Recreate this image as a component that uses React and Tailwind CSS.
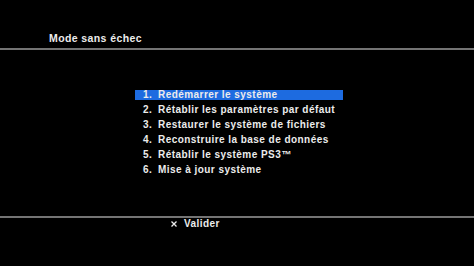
import React from "react";

const items = [
  "Redémarrer le système",
  "Rétablir les paramètres par défaut",
  "Restaurer le système de fichiers",
  "Reconstruire la base de données",
  "Rétablir le système PS3™",
  "Mise à jour système",
];

export default function App() {
  return (
    <div
      className="w-[474px] h-[266px] bg-black flex flex-col text-[#ececec] font-bold overflow-hidden"
      style={{ fontFamily: '"Liberation Sans", Arial, sans-serif' }}
    >
      {/* Title */}
      <div className="h-[48px] flex items-end pl-[49px] pb-[4px]">
        <span className="text-[10.5px] leading-[11px] tracking-[0.4px]">Mode sans échec</span>
      </div>
      <div className="h-[2px] bg-[#747474]" />

      {/* Menu */}
      <div className="mt-[40px] pl-[135px] flex flex-col gap-[5px]">
        {items.map((label, i) => (
          <div
            key={i}
            className={
              "h-[10px] w-[208px] flex items-center pl-[8px] text-[10px] leading-[10px] tracking-[0.45px] whitespace-nowrap " +
              (i === 0 ? "bg-[#1d6be0]" : "")
            }
          >
            <span className="w-[15px]">{i + 1}.</span>
            <span>{label}</span>
          </div>
        ))}
      </div>

      {/* Footer */}
      <div className="mt-[41px] h-[2px] bg-[#747474]" />
      <div className="mt-[1px] pl-[171px] flex items-center h-[10px] gap-[7px]">
        <svg width="6" height="6" viewBox="0 0 6 6">
          <path d="M0.5 0.5 L5.5 5.5 M5.5 0.5 L0.5 5.5" stroke="#ececec" strokeWidth="1.3" />
        </svg>
        <span className="text-[10px] leading-[10px] tracking-[0.45px]">Valider</span>
      </div>
    </div>
  );
}
